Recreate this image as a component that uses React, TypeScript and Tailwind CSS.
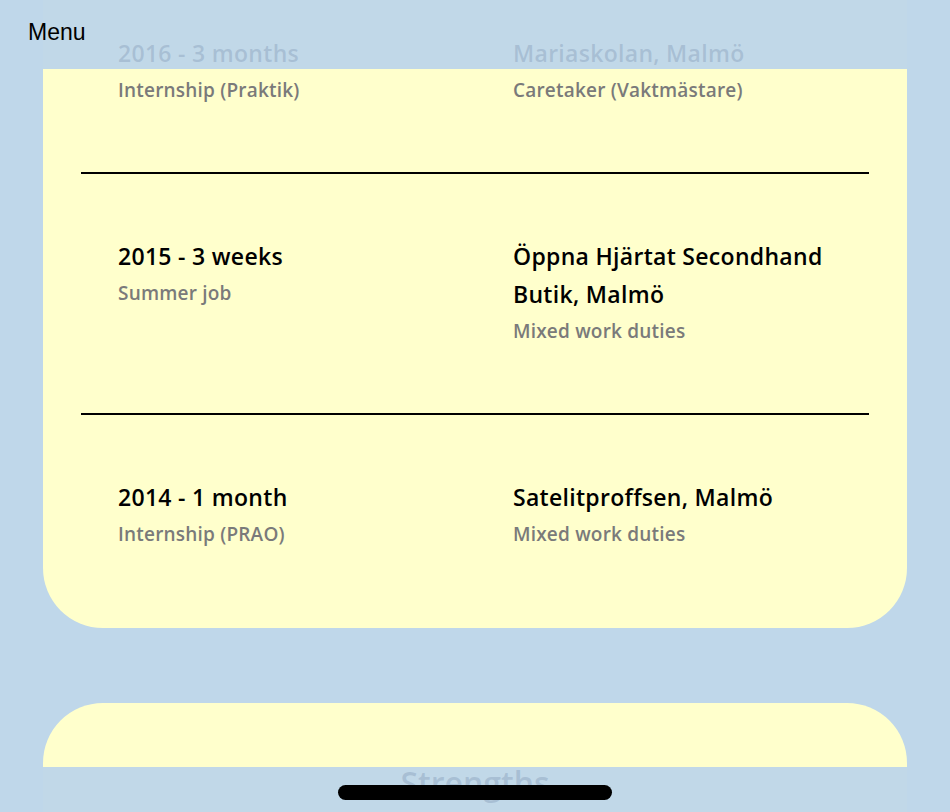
import React from 'react';

const JOBS = [
    { when: "2016 - 3 months", role: "Internship (Praktik)", place: "Mariaskolan, Malmö", duty: "Caretaker (Vaktmästare)" },
    { when: "2015 - 3 weeks", role: "Summer job", place: "Öppna Hjärtat Secondhand Butik, Malmö", duty: "Mixed work duties" },
    { when: "2014 - 1 month", role: "Internship (PRAO)", place: "Satelitproffsen, Malmö", duty: "Mixed work duties" },
];

const App: React.FC = () => {
    return (
        <div className="relative h-[812px] overflow-hidden bg-[#bfd7ea] font-['Open_Sans','Noto_Sans',sans-serif]">
            <div className="px-[43px] -mt-[29px]">
                {/* Experience card */}
                <section className="bg-[#ffffcc] rounded-b-[60px] px-[38px] pb-[12px]">
                    {JOBS.map((job, i) => (
                        <div key={job.when} className={i > 0 ? "border-t-2 border-black" : ""}>
                            <div className="grid grid-cols-[395px_330px] pl-[37px] py-[63px]">
                                <div>
                                    <h4 className="text-[23px] leading-[38px] font-semibold tracking-[0.3px] text-black">{job.when}</h4>
                                    <p className="text-[19px] leading-[37px] font-semibold tracking-[0.2px] text-[#7a7a7a]">{job.role}</p>
                                </div>
                                <div>
                                    <h4 className="text-[23px] leading-[38px] font-semibold tracking-[0.3px] text-black">{job.place}</h4>
                                    <p className="text-[19px] leading-[37px] font-semibold tracking-[0.2px] text-[#7a7a7a]">{job.duty}</p>
                                </div>
                            </div>
                        </div>
                    ))}
                </section>

                {/* Strengths card */}
                <section className="mt-[75px] bg-[#ffffcc] rounded-t-[60px] pt-[60px] h-[300px]">
                    <h3 className="text-center text-[32px] leading-[40px] font-semibold text-black">Strengths</h3>
                </section>
            </div>

            {/* Top bar */}
            <div className="absolute top-0 left-[43px] right-[43px] h-[69px] bg-[#bad4eb]/90" />
            <span className="absolute left-[28px] top-[18px] text-[23px] leading-[28px] text-black font-['Liberation_Sans',Arial,sans-serif]">Menu</span>

            {/* Bottom bar */}
            <div className="absolute bottom-0 left-[43px] right-[43px] h-[45px] bg-[#bad4eb]/90" />
            <div className="absolute left-[338px] top-[785px] w-[274px] h-[15px] rounded-full bg-black" />
        </div>
    );
};

export default App;
